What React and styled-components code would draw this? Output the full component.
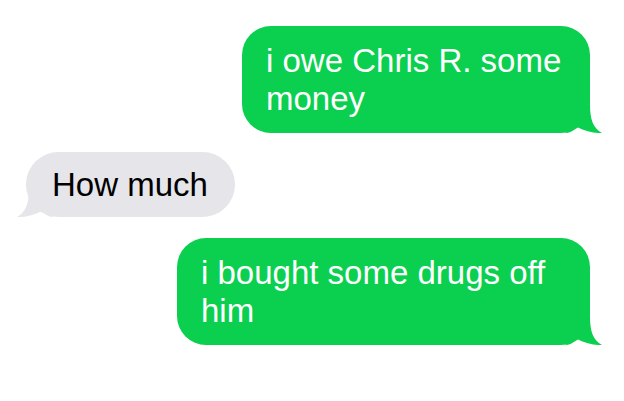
import React from "react";
import styled, { createGlobalStyle } from "styled-components";

const Global = createGlobalStyle`
  html, body { margin: 0; padding: 0; background: #ffffff; }
  body { font-family: "Liberation Sans", Arial, sans-serif; }
`;

const Thread = styled.div`
  width: 624px;
  height: 401px;
  box-sizing: border-box;
  padding: 26px 34px 0 26px;
  display: flex;
  flex-direction: column;
  gap: 19px;
  overflow: hidden;
`;

const Row = styled.div`
  display: flex;
  justify-content: ${(p) => (p.$mine ? "flex-end" : "flex-start")};
  margin-top: ${(p) => p.$extra || 0}px;
`;

const Bubble = styled.div`
  position: relative;
  box-sizing: border-box;
  width: ${(p) => (p.$width ? `${p.$width}px` : "auto")};
  padding: ${(p) => (p.$mine ? "16px 24px 15px 24px" : "14px 27px 13px 26px")};
  border-radius: ${(p) => (p.$mine ? "29px" : "33px")};
  background: ${(p) => (p.$mine ? "#0bcf4f" : "#e5e5ea")};
  color: ${(p) => (p.$mine ? "#ffffff" : "#000000")};
  font-size: 33px;
  line-height: 38px;
  white-space: nowrap;
`;

const Tail = styled.svg`
  position: absolute;
  bottom: 0;
  width: 36px;
  height: 28px;
  ${(p) =>
    p.$mine
      ? "right: -12px;"
      : "left: -9px; transform: scaleX(-1);"}
  fill: ${(p) => (p.$mine ? "#0bcf4f" : "#e5e5ea")};
`;

const TailShape = ({ mine }) => (
  <Tail $mine={mine} viewBox="0 0 36 28" aria-hidden="true">
    <path d="M0 0 L24 0 C24 14 27 23 36 28 C30 28.5 20 26.5 11 22 C8 25 4 28 0 28 Z" />
  </Tail>
);

const messages = [
  { mine: true, width: 348, lines: ["i owe Chris R. some", "money"] },
  { mine: false, lines: ["How much"] },
  { mine: true, width: 413, lines: ["i bought some drugs off", "him"], extra: 2 },
];

export default function App() {
  return (
    <>
      <Global />
      <Thread>
        {messages.map((m, i) => (
          <Row key={i} $mine={m.mine} $extra={m.extra}>
            <Bubble $mine={m.mine} $width={m.width}>
              {m.lines.map((l, j) => (
                <React.Fragment key={j}>
                  {j > 0 && <br />}
                  {l}
                </React.Fragment>
              ))}
              <TailShape mine={m.mine} />
            </Bubble>
          </Row>
        ))}
      </Thread>
    </>
  );
}
